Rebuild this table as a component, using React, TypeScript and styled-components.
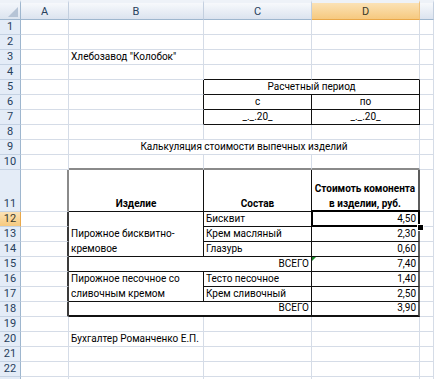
import React from "react";
import styled, { createGlobalStyle, css } from "styled-components";

const GRID = "#d5dce7";
const INK = "#111111";
const THIN = `1px solid ${INK}`;
const TOPB = "2px solid #8a8a8a";
const LEFTB_HEAD = "2px solid #8a8a8a";
const LEFTB = "2px solid #3a3a3a";
const RIGHTB = "2px solid #5c5c5c";
const BOTB = "2px solid #111111";
const FONT = `Roboto, "Liberation Sans", Arial, sans-serif`;

const GlobalStyle = createGlobalStyle`
  html, body { margin: 0; padding: 0; background: #ffffff; overflow: hidden; }
  body { font-family: ${FONT}; }
  * { box-sizing: border-box; }
`;

const Sheet = styled.div`
  display: grid;
  grid-template-columns: 21px 48px 135px 108px 108px 1fr;
  grid-template-rows: 20px repeat(10, 15px) 42px repeat(12, 15px);
  width: 434px;
  height: 379px;
  overflow: hidden;
  font-family: ${FONT};
  font-size: 10px;
  color: #000;
  background: #ffffff;
`;

const Row = styled.div`
  display: contents;
`;

const Corner = styled.div`
  background: linear-gradient(#f3f6fb, #dce4ef);
  border-top: 3px solid #eef2f8;
  border-right: 1px solid #9eb6ce;
  border-bottom: 1px solid #9eb6ce;
  display: flex;
  align-items: flex-end;
  justify-content: flex-end;
  padding: 0 2px 2px 0;
`;

const headerSelected = css`
  background: linear-gradient(#fbe2b6, #f6c97f);
  color: #3a3a2a;
`;

const ColHeader = styled.div<{ $sel?: boolean }>`
  background: linear-gradient(#f7f9fc, #dbe3ef);
  border-top: 3px solid #eef2f8;
  border-right: 1px solid #c3cfdf;
  border-bottom: 1px solid #9eb6ce;
  color: #27405c;
  display: flex;
  align-items: center;
  justify-content: center;
  font-size: 11px;
  ${(p) => p.$sel && headerSelected}
  ${(p) => p.$sel && css`border-bottom-color: #e9a84a; border-right-color: #efc27e;`}
`;

const RowHeader = styled.div<{ $sel?: boolean }>`
  background: #e4ecf7;
  border-right: 1px solid #9eb6ce;
  border-bottom: 1px solid #c5d2e3;
  color: #27405c;
  display: flex;
  align-items: flex-end;
  justify-content: center;
  line-height: 14px;
  font-size: 11px;
  ${(p) => p.$sel && headerSelected}
  ${(p) => p.$sel && css`border-right-color: #e9a84a;`}
`;

type Align = "left" | "center" | "right";

const Cell = styled.div<{
  $cs: number;
  $rs: number;
  $align: Align;
  $bold?: boolean;
  $r: string;
  $b: string;
  $sel?: boolean;
  $flag?: boolean;
}>`
  grid-column: span ${(p) => p.$cs};
  grid-row: span ${(p) => p.$rs};
  border-right: ${(p) => p.$r};
  border-bottom: ${(p) => p.$b};
  display: flex;
  flex-direction: column;
  justify-content: flex-end;
  align-items: ${(p) =>
    p.$align === "left" ? "flex-start" : p.$align === "right" ? "flex-end" : "center"};
  text-align: ${(p) => p.$align};
  padding: 0 2px 0 2px;
  line-height: 15px;
  white-space: nowrap;
  font-weight: ${(p) => (p.$bold ? 700 : 400)};
  ${(p) =>
    p.$sel &&
    css`
      position: relative;
      &::after {
        content: "";
        position: absolute;
        left: -1px;
        top: -2px;
        right: -2px;
        bottom: -1px;
        border: 2px solid #000;
        pointer-events: none;
      }
      &::before {
        content: "";
        position: absolute;
        right: -5px;
        bottom: -4px;
        width: 5px;
        height: 5px;
        background: #000;
        outline: 1px solid #fff;
        z-index: 2;
      }
    `}
  ${(p) =>
    p.$flag &&
    css`
      position: relative;
      &::before {
        content: "";
        position: absolute;
        left: 0;
        top: 0;
        border-top: 4px solid #1d8a2a;
        border-right: 4px solid transparent;
      }
    `}
`;

const CornerMark = () => (
  <svg width="10" height="10" viewBox="0 0 10 10">
    <polygon points="10,0 10,10 0,10" fill="#b6c4d6" />
  </svg>
);

type Spec = {
  text?: React.ReactNode;
  cs?: number;
  rs?: number;
  align?: Align;
  bold?: boolean;
  r?: string;
  b?: string;
  sel?: boolean;
  flag?: boolean;
};

type RowSpec = { n: number; cells: Spec[] };

const G = `1px solid ${GRID}`;
const e: Spec = {};
const blank = (): Spec[] => [e, e, e, e, e];

const tb = (text: React.ReactNode, extra: Spec = {}): Spec => ({
  text,
  r: THIN,
  b: THIN,
  ...extra,
});

const rows: RowSpec[] = [
  { n: 1, cells: blank() },
  { n: 2, cells: blank() },
  { n: 3, cells: [e, { text: 'Хлебозавод "Колобок"' }, e, e, e] },
  { n: 4, cells: [e, e, { b: THIN }, { b: THIN }, e] },
  {
    n: 5,
    cells: [e, { r: THIN }, tb("Расчетный период", { cs: 2, align: "center" }), e],
  },
  {
    n: 6,
    cells: [e, { r: THIN }, tb("с", { align: "center" }), tb("по", { align: "center" }), e],
  },
  {
    n: 7,
    cells: [e, { r: THIN }, tb("_._.20_", { align: "center" }), tb("_._.20_", { align: "center" }), e],
  },
  { n: 8, cells: blank() },
  {
    n: 9,
    cells: [e, { text: "Калькуляция стоимости выпечных изделий", cs: 3, align: "center" }, e],
  },
  { n: 10, cells: [e, { b: TOPB }, { b: TOPB }, { b: TOPB }, e] },
  {
    n: 11,
    cells: [
      { r: LEFTB_HEAD },
      tb("Изделие", { bold: true, align: "center" }),
      tb("Состав", { bold: true, align: "center" }),
      tb(
        <>
          Стоимоть комонента
          <br />в изделии, руб.
        </>,
        { bold: true, align: "center", r: RIGHTB }
      ),
      e,
    ],
  },
  {
    n: 12,
    cells: [
      { r: LEFTB },
      tb(
        <>
          Пирожное бисквитно-
          <br />
          кремовое
        </>,
        { rs: 3 }
      ),
      tb("Бисквит"),
      tb("4,50", { align: "right", r: RIGHTB, sel: true }),
      e,
    ],
  },
  { n: 13, cells: [{ r: LEFTB }, tb("Крем масляный"), tb("2,30", { align: "right", r: RIGHTB }), e] },
  { n: 14, cells: [{ r: LEFTB }, tb("Глазурь"), tb("0,60", { align: "right", r: RIGHTB }), e] },
  {
    n: 15,
    cells: [
      { r: LEFTB },
      tb("ВСЕГО", { cs: 2, align: "right" }),
      tb("7,40", { align: "right", r: RIGHTB, flag: true }),
      e,
    ],
  },
  {
    n: 16,
    cells: [
      { r: LEFTB },
      tb(
        <>
          Пирожное песочное со
          <br />
          сливочным кремом
        </>,
        { rs: 2 }
      ),
      tb("Тесто песочное"),
      tb("1,40", { align: "right", r: RIGHTB }),
      e,
    ],
  },
  { n: 17, cells: [{ r: LEFTB }, tb("Крем сливочный"), tb("2,50", { align: "right", r: RIGHTB }), e] },
  {
    n: 18,
    cells: [
      { r: LEFTB },
      tb("ВСЕГО", { cs: 2, align: "right", b: BOTB }),
      tb("3,90", { align: "right", r: RIGHTB, b: BOTB }),
      e,
    ],
  },
  { n: 19, cells: blank() },
  { n: 20, cells: [e, { text: "Бухгалтер Романченко Е.П." }, e, e, e] },
  { n: 21, cells: blank() },
  { n: 22, cells: blank() },
  { n: 23, cells: blank() },
];

const columns = ["A", "B", "C", "D", "E"];

export default function App() {
  return (
    <>
      <GlobalStyle />
      <Sheet>
        <Row>
          <Corner>
            <CornerMark />
          </Corner>
          {columns.map((c) => (
            <ColHeader key={c} $sel={c === "D"}>
              {c === "E" ? "" : c}
            </ColHeader>
          ))}
        </Row>
        {rows.map((row) => (
          <Row key={row.n}>
            <RowHeader $sel={row.n === 12}>{row.n <= 22 ? row.n : ""}</RowHeader>
            {row.cells.map((s, i) => (
              <Cell
                key={i}
                $cs={s.cs ?? 1}
                $rs={s.rs ?? 1}
                $align={s.align ?? "left"}
                $bold={s.bold}
                $r={s.r ?? G}
                $b={s.b ?? G}
                $sel={s.sel}
                $flag={s.flag}
              >
                {s.text != null && <span>{s.text}</span>}
              </Cell>
            ))}
          </Row>
        ))}
      </Sheet>
    </>
  );
}
